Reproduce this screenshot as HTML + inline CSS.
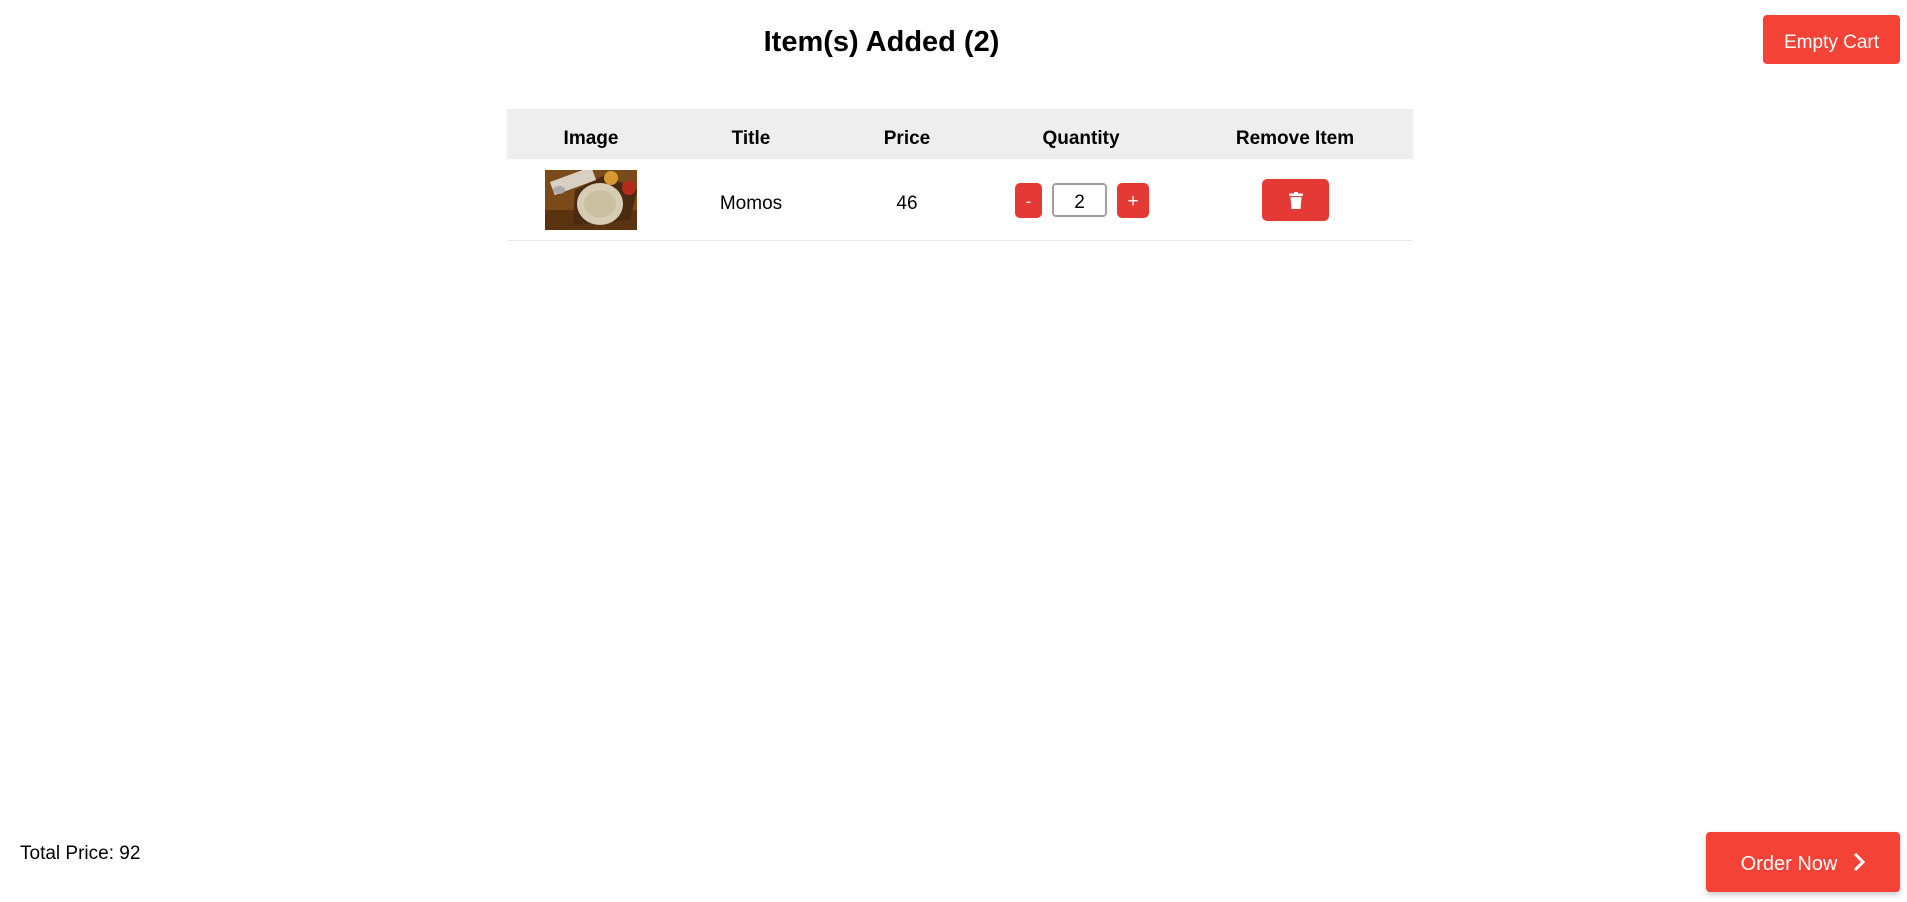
<!DOCTYPE html>
<html><head><style>
*{box-sizing:border-box;margin:0;padding:0}
body{width:1907px;height:902px;background:#fff;font-family:"Liberation Sans",sans-serif;position:relative;overflow:hidden;color:#000}
.abs{position:absolute}
h1{position:absolute;left:0;width:1763px;top:26px;text-align:center;font-size:29px;font-weight:bold}
.btn{position:absolute;background:#f44336;color:#fff;border-radius:4px;display:flex;align-items:center;justify-content:center}
.hdr{position:absolute;left:507px;top:109px;width:906px;height:50px;background:#eeeeee}
.c{position:absolute;text-align:center;transform:translateX(-50%);white-space:nowrap}
.th{font-weight:bold;font-size:19px;top:128px}
.td{font-size:19px;top:193px}
.rb{position:absolute;background:#e53935;border-radius:5px;color:#fff;display:flex;align-items:center;justify-content:center;font-size:17px}
</style></head><body>
<h1>Item(s) Added (2)</h1>
<div class="btn" style="left:1763px;top:15px;width:137px;height:49px;font-size:19px;padding-top:6px">Empty Cart</div>
<div class="hdr"></div>
<div class="c th" style="left:591px">Image</div>
<div class="c th" style="left:751px">Title</div>
<div class="c th" style="left:907px">Price</div>
<div class="c th" style="left:1081px">Quantity</div>
<div class="c th" style="left:1295px">Remove Item</div>
<svg class="abs" style="left:545px;top:170px" width="92" height="60" viewBox="0 0 92 60">
<rect width="92" height="60" fill="#7a4a1a"/>
<rect y="40" width="92" height="20" fill="#5a3410"/>
<path d="M28 55 L85 50 L92 20 L60 5 L30 20Z" fill="#4a2a10"/>
<rect x="6" y="4" width="44" height="14" fill="#d8cfc4" transform="rotate(-20 28 11)"/>
<ellipse cx="55" cy="34" rx="23" ry="21" fill="#d6cdb4"/>
<ellipse cx="55" cy="34" rx="16" ry="14" fill="#c9c0a0"/>
<circle cx="66" cy="8" r="7" fill="#d89a30"/>
<circle cx="84" cy="18" r="7" fill="#b52a1c"/>
<ellipse cx="14" cy="20" rx="6" ry="4" fill="#aaa"/>
</svg>
<div class="c td" style="left:751px">Momos</div>
<div class="c td" style="left:907px">46</div>
<div class="rb" style="left:1015px;top:183px;width:27px;height:35px;padding-top:3px">-</div>
<div class="abs" style="left:1052px;top:183px;width:55px;height:34px;border:2px solid #a0a0a0;border-radius:4px;font-size:19px;text-align:center;line-height:36px">2</div>
<div class="rb" style="left:1117px;top:183px;width:32px;height:35px;font-size:19px;padding-top:3px">+</div>
<div class="rb" style="left:1262px;top:179px;width:67px;height:42px">
<svg width="14" height="17" viewBox="0 0 14 17"><rect x="0" y="1.5" width="14" height="2.5" rx="1" fill="#fff"/><rect x="5" y="0" width="4" height="2" fill="#fff"/><path d="M1.5 5 H12.5 L11.5 17 H2.5Z" fill="#fff"/></svg>
</div>
<div class="abs" style="left:507px;top:240px;width:906px;height:1px;background:#e8e8e8"></div>
<div class="abs" style="left:20px;top:843px;font-size:19px">Total Price: 92</div>
<div class="btn" style="left:1706px;top:832px;width:194px;height:60px;font-size:20px;padding-top:4px;box-shadow:0 3px 6px rgba(0,0,0,0.2)">Order Now
<svg style="margin-left:16px;margin-top:-4px" width="12" height="20" viewBox="0 0 12 20"><path d="M2 2 L10 10 L2 18" stroke="#fff" stroke-width="3" fill="none"/></svg></div>
</body></html>
